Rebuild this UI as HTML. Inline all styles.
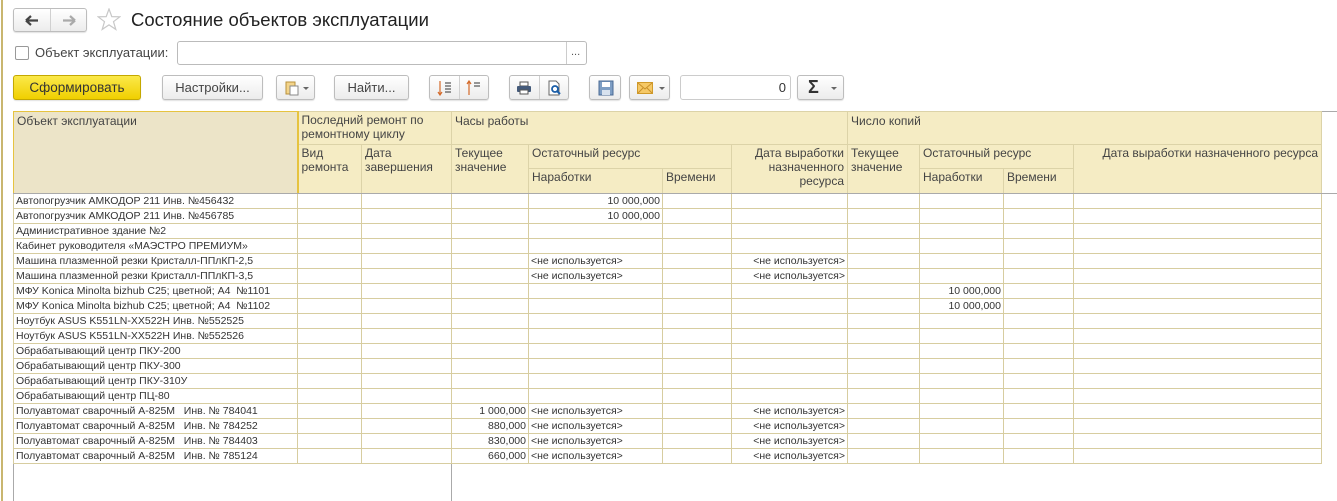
<!DOCTYPE html>
<html><head><meta charset="utf-8"><style>
*{box-sizing:border-box;margin:0;padding:0}
body{width:1337px;height:501px;overflow:hidden;background:#fff;font-family:"Liberation Sans",sans-serif;color:#333;position:relative}
.abs{position:absolute}
.lb{position:absolute;left:1px;top:0;width:2px;height:501px;background:#c9b66f}
.btn{position:absolute;border:1px solid #bdbdbd;border-radius:3px;background:linear-gradient(#fff,#ececec);box-shadow:0 1px 1px rgba(0,0,0,.12);font-size:13px;color:#444;text-align:center;line-height:23px}
.sep{position:absolute;top:0;width:1px;height:100%;background:#d0d0d0}
.dd{position:absolute;width:0;height:0;border-left:3px solid transparent;border-right:3px solid transparent;border-top:3px solid #666}
table{position:absolute;left:13px;top:111px;border-collapse:collapse;table-layout:fixed;font-size:10.5px}
td,th{border:1px solid #d7cda0;overflow:hidden;white-space:nowrap;font-weight:normal;padding:0 2px}
th{background:#f5ecc4;text-align:left;vertical-align:top;font-size:12px;color:#444;line-height:14px;padding:1px 3px;white-space:normal;border-color:#dcd3a8}
td{height:15px;line-height:13px;color:#333}
td.r{text-align:right}
</style></head><body>
<div class="lb"></div>
<div class="btn" style="left:13px;top:8px;width:74px;height:24px">
 <div class="sep" style="left:36px"></div>
 <svg class="abs" style="left:11px;top:6px" width="14" height="11"><path d="M1 5.5H13M1 5.5L6 1M1 5.5L6 10" stroke="#444" stroke-width="2.2" fill="none"/></svg>
 <svg class="abs" style="left:48px;top:6px" width="14" height="11"><path d="M1 5.5H13M13 5.5L8 1M13 5.5L8 10" stroke="#aaa" stroke-width="2.2" fill="none"/></svg>
</div>
<svg class="abs" style="left:97px;top:8px" width="24" height="23"><path d="M12 1L14.8 8.6L22.8 8.8L16.5 13.7L18.8 21.4L12 16.9L5.2 21.4L7.5 13.7L1.2 8.8L9.2 8.6Z" fill="none" stroke="#c8c8c8" stroke-width="1.2"/></svg>
<div class="abs" style="left:131px;top:9px;font-size:18.5px;color:#222">Состояние объектов эксплуатации</div>
<div class="abs" style="left:15px;top:46px;width:14px;height:14px;border:1px solid #999;border-radius:2px;background:#fff"></div>
<div class="abs" style="left:35px;top:45px;font-size:13px;color:#444">Объект эксплуатации:</div>
<div class="abs" style="left:177px;top:41px;width:410px;height:24px;border:1px solid #bbb;border-radius:3px;background:#fff">
 <div class="abs" style="left:388px;top:0;width:1px;height:22px;background:#ccc"></div>
 <div class="abs" style="left:393px;top:4px;font-size:11px;color:#555">...</div>
</div>
<div class="btn" style="left:13px;top:75px;width:128px;height:25px;background:linear-gradient(#fbe94a,#f0cf00);border-color:#c4a800;color:#333;font-size:13.5px">Сформировать</div>
<div class="btn" style="left:162px;top:75px;width:101px;height:25px">Настройки...</div>
<div class="btn" style="left:276px;top:75px;width:39px;height:25px">
 <svg class="abs" style="left:8px;top:4px" width="14" height="16"><rect x="1" y="2" width="9" height="12" fill="#f3d48a" stroke="#b8913b"/><rect x="5" y="6" width="8" height="9" fill="#fff" stroke="#888"/></svg>
 <div class="dd" style="left:26px;top:11px"></div></div>
<div class="btn" style="left:334px;top:75px;width:75px;height:25px">Найти...</div>
<div class="btn" style="left:429px;top:75px;width:60px;height:25px">
 <div class="sep" style="left:29px"></div>
 <svg class="abs" style="left:7px;top:4px" width="16" height="16"><path d="M3 1V14M1 12L3 15L5 12" stroke="#d46a2a" fill="none" stroke-width="1.2"/><path d="M8 3H14M8 6H14M8 9H14M8 12H14" stroke="#333" stroke-width="1"/></svg>
 <svg class="abs" style="left:36px;top:4px" width="16" height="16"><path d="M3 2V15M1 4L3 1L5 4" stroke="#d46a2a" fill="none" stroke-width="1.2"/><path d="M8 3H14M8 6H14" stroke="#333" stroke-width="1"/></svg>
</div>
<div class="btn" style="left:509px;top:75px;width:60px;height:25px">
 <div class="sep" style="left:29px"></div>
 <svg class="abs" style="left:6px;top:5px" width="16" height="14"><rect x="4" y="1" width="8" height="4" fill="#fff" stroke="#555"/><rect x="1" y="5" width="14" height="6" rx="1" fill="#445a7a"/><rect x="4" y="9" width="8" height="4" fill="#fff" stroke="#555"/></svg>
 <svg class="abs" style="left:37px;top:4px" width="16" height="16"><path d="M2 1H9L12 4V15H2Z" fill="#fff" stroke="#666"/><circle cx="8" cy="9" r="3" fill="none" stroke="#1a5ea8" stroke-width="1.8"/><path d="M10 11L13 14" stroke="#1a5ea8" stroke-width="2"/></svg>
</div>
<div class="btn" style="left:589px;top:75px;width:32px;height:25px">
 <svg class="abs" style="left:8px;top:4px" width="16" height="16"><rect x="1" y="1" width="14" height="14" fill="#7e9ec4" stroke="#4a6a94"/><rect x="4" y="2" width="8" height="5" fill="#fff"/><rect x="4" y="10" width="8" height="5" fill="#d8e2ee"/></svg></div>
<div class="btn" style="left:629px;top:75px;width:41px;height:25px">
 <svg class="abs" style="left:7px;top:6px" width="16" height="12"><rect x="0.5" y="0.5" width="15" height="11" fill="#f5c866" stroke="#d09a2a"/><path d="M1 1L8 7L15 1M1 11L6 6M15 11L10 6" stroke="#c8902a" fill="none"/></svg>
 <div class="dd" style="left:29px;top:11px"></div></div>
<div class="abs" style="left:680px;top:75px;width:111px;height:25px;border:1px solid #ccc;border-radius:3px;font-size:13px;text-align:right;padding-right:4px;line-height:23px;color:#333">0</div>
<div class="btn" style="left:797px;top:75px;width:47px;height:25px"><span class="abs" style="left:10px;top:0;font-size:18px;font-weight:bold;color:#333">Σ</span><div class="dd" style="left:33px;top:11px"></div></div>

<div class="abs" style="left:13px;top:111px;width:1px;height:390px;background:#aaa"></div>
<div class="abs" style="left:451px;top:463px;width:1px;height:38px;background:#aaa"></div>
<div class="abs" style="left:13px;top:111px;width:1324px;height:1px;background:#aaa"></div>

<table>
<colgroup><col style="width:284px"><col style="width:64px"><col style="width:90px"><col style="width:77px"><col style="width:134px"><col style="width:69px"><col style="width:116px"><col style="width:72px"><col style="width:84px"><col style="width:70px"><col style="width:248px"></colgroup>
<tr style="height:33px"><th rowspan="3" style="background:#ece4c8;border:1px solid #e6c340;border-right:2px solid #e6c340;padding-top:2px">Объект эксплуатации</th><th colspan="2">Последний ремонт по ремонтному циклу</th><th colspan="4" style="padding-top:2px">Часы работы</th><th colspan="4" style="padding-top:2px">Число копий</th></tr>
<tr style="height:24px"><th rowspan="2">Вид ремонта</th><th rowspan="2">Дата завершения</th><th rowspan="2">Текущее значение</th><th colspan="2">Остаточный ресурс</th><th rowspan="2" style="text-align:right">Дата выработки назначенного ресурса</th><th rowspan="2">Текущее значение</th><th colspan="2">Остаточный ресурс</th><th rowspan="2" style="text-align:right">Дата выработки назначенного ресурса</th></tr>
<tr style="height:25px"><th>Наработки</th><th>Времени</th><th>Наработки</th><th>Времени</th></tr>
<tr><td>Автопогрузчик АМКОДОР 211 Инв. №456432</td><td></td><td></td><td></td><td class="r">10 000,000</td><td></td><td></td><td></td><td></td><td></td><td></td></tr>
<tr><td>Автопогрузчик АМКОДОР 211 Инв. №456785</td><td></td><td></td><td></td><td class="r">10 000,000</td><td></td><td></td><td></td><td></td><td></td><td></td></tr>
<tr><td>Административное здание №2</td><td></td><td></td><td></td><td></td><td></td><td></td><td></td><td></td><td></td><td></td></tr>
<tr><td>Кабинет руководителя «МАЭСТРО ПРЕМИУМ»</td><td></td><td></td><td></td><td></td><td></td><td></td><td></td><td></td><td></td><td></td></tr>
<tr><td>Машина плазменной резки Кристалл-ППлКП-2,5</td><td></td><td></td><td></td><td>&lt;не используется&gt;</td><td></td><td class="r">&lt;не используется&gt;</td><td></td><td></td><td></td><td></td></tr>
<tr><td>Машина плазменной резки Кристалл-ППлКП-3,5</td><td></td><td></td><td></td><td>&lt;не используется&gt;</td><td></td><td class="r">&lt;не используется&gt;</td><td></td><td></td><td></td><td></td></tr>
<tr><td>МФУ Konica Minolta bizhub C25; цветной; A4&nbsp; №1101</td><td></td><td></td><td></td><td></td><td></td><td></td><td></td><td class="r">10 000,000</td><td></td><td></td></tr>
<tr><td>МФУ Konica Minolta bizhub C25; цветной; A4&nbsp; №1102</td><td></td><td></td><td></td><td></td><td></td><td></td><td></td><td class="r">10 000,000</td><td></td><td></td></tr>
<tr><td>Ноутбук ASUS K551LN-XX522H Инв. №552525</td><td></td><td></td><td></td><td></td><td></td><td></td><td></td><td></td><td></td><td></td></tr>
<tr><td>Ноутбук ASUS K551LN-XX522H Инв. №552526</td><td></td><td></td><td></td><td></td><td></td><td></td><td></td><td></td><td></td><td></td></tr>
<tr><td>Обрабатывающий центр ПКУ-200</td><td></td><td></td><td></td><td></td><td></td><td></td><td></td><td></td><td></td><td></td></tr>
<tr><td>Обрабатывающий центр ПКУ-300</td><td></td><td></td><td></td><td></td><td></td><td></td><td></td><td></td><td></td><td></td></tr>
<tr><td>Обрабатывающий центр ПКУ-310У</td><td></td><td></td><td></td><td></td><td></td><td></td><td></td><td></td><td></td><td></td></tr>
<tr><td>Обрабатывающий центр ПЦ-80</td><td></td><td></td><td></td><td></td><td></td><td></td><td></td><td></td><td></td><td></td></tr>
<tr><td>Полуавтомат сварочный А-825М&nbsp;&nbsp; Инв. № 784041</td><td></td><td></td><td class="r">1 000,000</td><td>&lt;не используется&gt;</td><td></td><td class="r">&lt;не используется&gt;</td><td></td><td></td><td></td><td></td></tr>
<tr><td>Полуавтомат сварочный А-825М&nbsp;&nbsp; Инв. № 784252</td><td></td><td></td><td class="r">880,000</td><td>&lt;не используется&gt;</td><td></td><td class="r">&lt;не используется&gt;</td><td></td><td></td><td></td><td></td></tr>
<tr><td>Полуавтомат сварочный А-825М&nbsp;&nbsp; Инв. № 784403</td><td></td><td></td><td class="r">830,000</td><td>&lt;не используется&gt;</td><td></td><td class="r">&lt;не используется&gt;</td><td></td><td></td><td></td><td></td></tr>
<tr><td>Полуавтомат сварочный А-825М&nbsp;&nbsp; Инв. № 785124</td><td></td><td></td><td class="r">660,000</td><td>&lt;не используется&gt;</td><td></td><td class="r">&lt;не используется&gt;</td><td></td><td></td><td></td><td></td></tr>
</table>
<div class="abs" style="left:13px;top:193px;width:1324px;height:1px;background:#aaa"></div>
</body></html>
